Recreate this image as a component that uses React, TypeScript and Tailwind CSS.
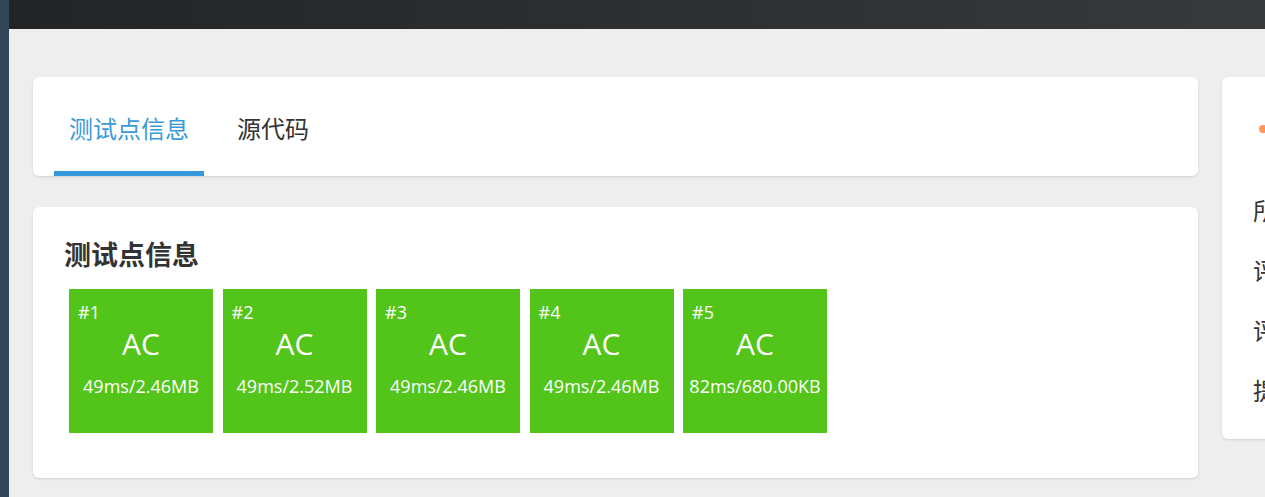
import React from 'react';

const cjk = "font-['Noto_Sans_CJK_SC','Noto_Sans',sans-serif]";
const latin = "font-['Open_Sans','Noto_Sans',sans-serif]";

const cases = [
  { id: 1, status: 'AC', usage: '49ms/2.46MB' },
  { id: 2, status: 'AC', usage: '49ms/2.52MB' },
  { id: 3, status: 'AC', usage: '49ms/2.46MB' },
  { id: 4, status: 'AC', usage: '49ms/2.46MB' },
  { id: 5, status: 'AC', usage: '82ms/680.00KB' },
];

const TestCase: React.FC<{ id: number; status: string; usage: string }> = ({ id, status, usage }) => (
  <div className={`w-[144px] h-[144px] bg-[#52c41a] text-white flex flex-col pt-[11px] px-[9px] ${latin}`}>
    <div className="text-[18px] leading-6">#{id}</div>
    <div className="text-[30px] leading-[30px] mt-[5px] text-center">{status}</div>
    <div className="text-[18px] leading-[18px] mt-[18px] text-center whitespace-nowrap -mx-[9px]">{usage}</div>
  </div>
);

export default function App() {
  return (
    <div className={`w-[1265px] h-[497px] overflow-hidden flex bg-[#eeeeee] text-[#333] ${cjk}`}>
      <div className="w-[9px] shrink-0 bg-[#33475b]" />
      <div className="flex-1 flex flex-col min-w-0">
        <div className="h-[29px] shrink-0 bg-gradient-to-r from-[#232425] to-[#38393b]" />
        <div className="flex gap-[24px] pl-[24px] pt-[48px]">
          <div className="w-[1165px] shrink-0 flex flex-col gap-[31px]">
            <div className="h-[99px] bg-white rounded-md shadow-sm flex pl-[21px] gap-[18px]">
              <div className="h-full px-[15px] pt-[7px] border-b-[5px] border-[#3498db] flex items-center text-[24px] text-[#3a9ad9]">
                测试点信息
              </div>
              <div className="h-full px-[15px] pt-[7px] border-b-[5px] border-transparent flex items-center text-[24px] text-[#333]">
                源代码
              </div>
            </div>
            <div className="h-[271px] bg-white rounded-md shadow-sm pl-[31px] pt-[27px]">
              <div className="text-[27px] leading-[40px] font-bold text-[#333]">测试点信息</div>
              <div className="flex gap-[9.5px] mt-[15px] ml-[5px]">
                {cases.map((c) => (
                  <TestCase key={c.id} {...c} />
                ))}
              </div>
            </div>
          </div>
          <div className="w-[320px] shrink-0 h-[362px] bg-white rounded-md shadow-sm pl-[31px]">
            <div className="h-[103px] flex items-center pt-[1px]">
              <span className="ml-[6px] w-[8px] h-[8px] rounded-full bg-[#ff9557]" />
            </div>
            <div className="text-[24px] text-[#333]">
              <div className="h-[60px] flex items-center">所属题目</div>
              <div className="h-[60px] flex items-center">评测状态</div>
              <div className="h-[60px] flex items-center">评测分数</div>
              <div className="h-[60px] flex items-center">提交时间</div>
            </div>
          </div>
        </div>
      </div>
    </div>
  );
}
